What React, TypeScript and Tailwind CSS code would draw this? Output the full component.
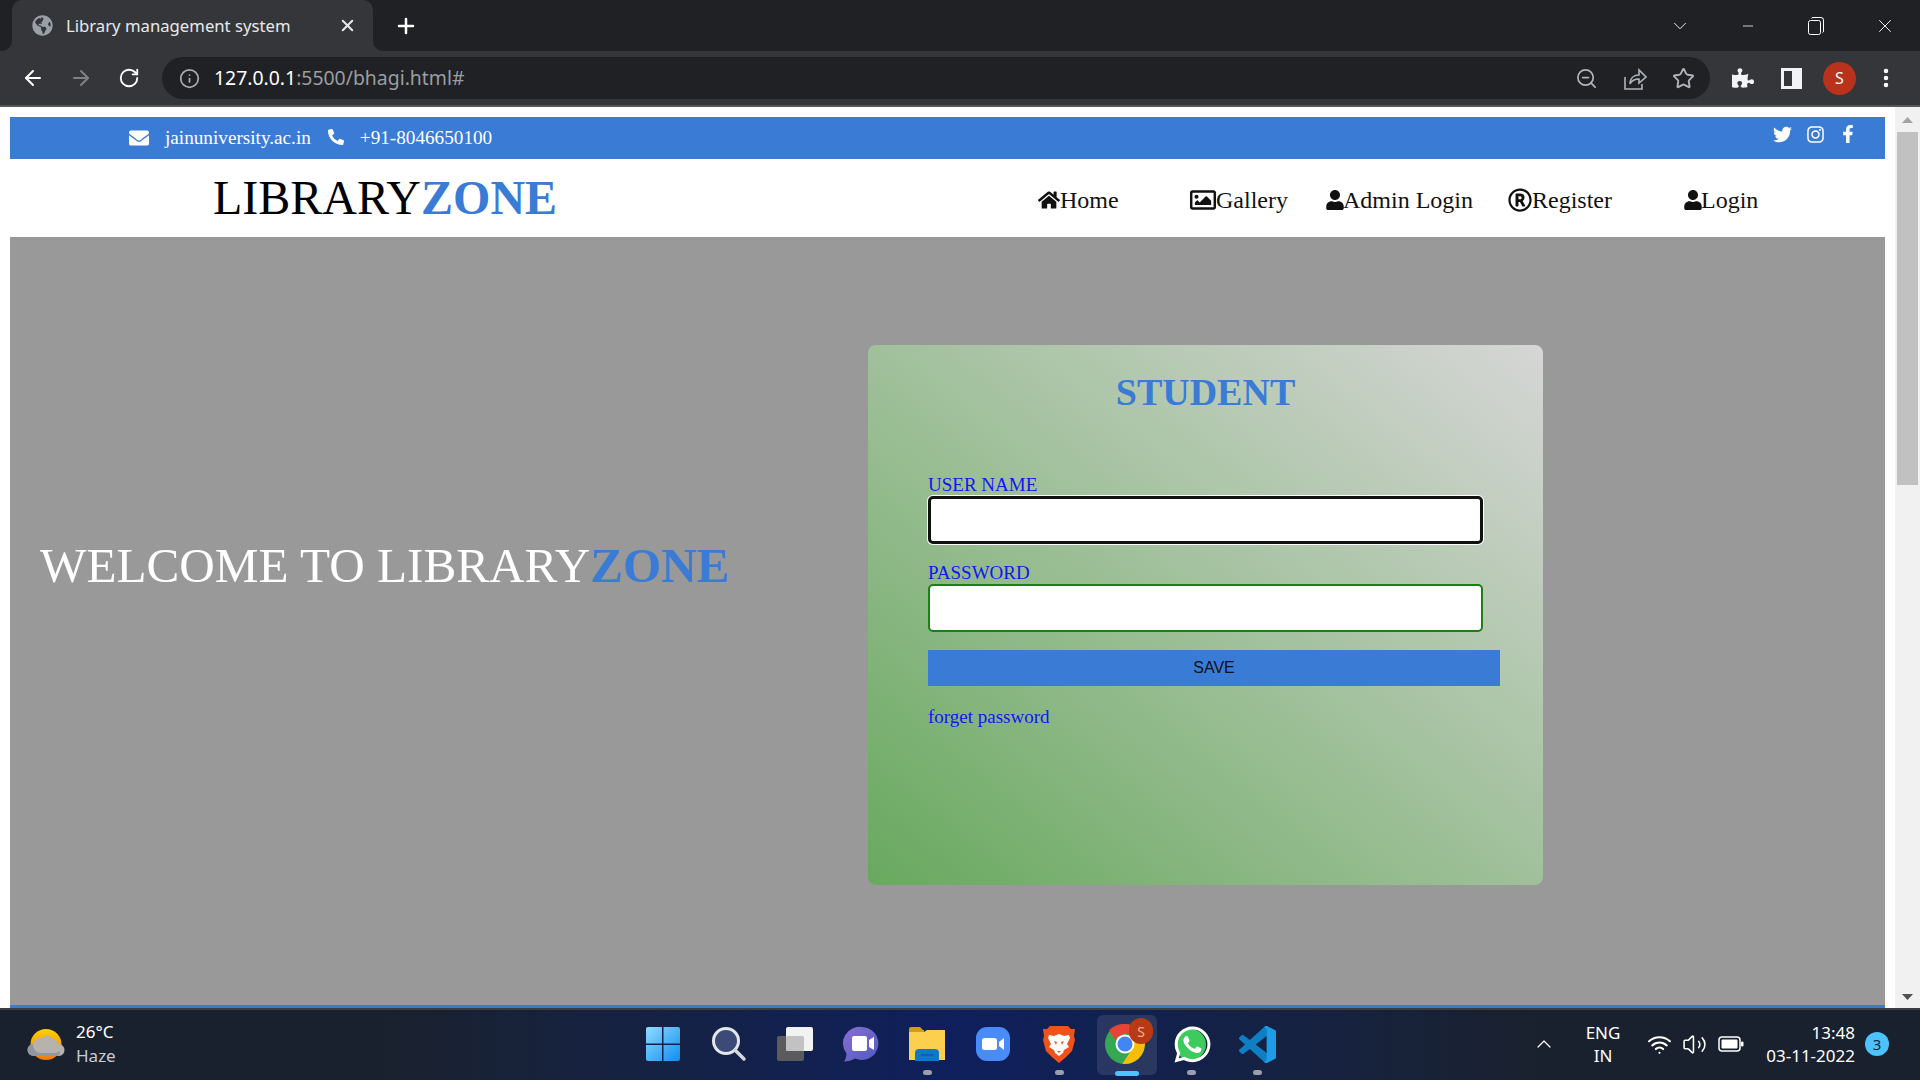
import React from 'react';
import {
  ArrowLeft, ArrowRight, RotateCw, Info, ZoomOut, Star, MoreVertical, Plus, X, ChevronDown, ChevronUp, Minus, Volume2, Wifi,
} from 'lucide-react';
import {
  FaEnvelope, FaPhoneAlt, FaTwitter, FaInstagram, FaFacebookF, FaHome, FaRegImage, FaUser, FaRegRegistered, FaGlobeAmericas, FaWhatsapp, FaPuzzlePiece,
} from 'react-icons/fa';

const serif = "font-['Liberation_Serif',serif]";

const NavItem = ({ icon, label, width }: { icon: React.ReactNode; label: string; width: string }) => (
  <a href="#" className={`flex items-center mt-[4px] text-[24px] text-[#111] ${width}`}>
    {icon}
    <span>{label}</span>
  </a>
);

const Field = ({ label, border, top }: { label: string; border: string; top: string }) => (
  <div className={top}>
    <label className="block text-[19px] leading-[22px] text-[#1414f5]">{label}</label>
    <input className={`block w-[555px] h-[48px] bg-white rounded-[5px] ${border}`} />
  </div>
);

const TaskIcon = ({ children, dot, active }: { children: React.ReactNode; dot?: boolean; active?: boolean }) => (
  <div className="relative w-[66px] h-[72px] pb-[2px] flex items-center justify-center">
    {active && <div className="absolute left-[5px] top-[6px] w-[60px] h-[60px] rounded-[6px] bg-white/10" />}
    <div className="relative">{children}</div>
    {dot && <div className="absolute bottom-[6px] left-[29px] w-[9px] h-[5px] rounded-full bg-[#9a9fab]" />}
    {active && <div className="absolute bottom-[5px] left-[23px] w-[24px] h-[5px] rounded-full bg-[#4cc2ff]" />}
  </div>
);

const WinLogo = () => (
  <svg width="36" height="36" viewBox="0 0 36 36">
    <defs>
      <linearGradient id="win" x1="0" y1="0" x2="1" y2="1">
        <stop offset="0" stopColor="#8fdcff" />
        <stop offset="1" stopColor="#0f8df0" />
      </linearGradient>
    </defs>
    <path fill="url(#win)" d="M1 3a2 2 0 0 1 2-2h14v16.500H1zM18.500 1H33a2 2 0 0 1 2 2v14.500H18.500zM1 19h16v16H3a2 2 0 0 1-2-2zM18.500 19H35v14a2 2 0 0 1-2 2H18.500z" />
  </svg>
);

const SearchIcon = () => (
  <svg width="36" height="36" viewBox="0 0 36 36">
    <circle cx="15" cy="15" r="12.500" fill="#3c4a78" stroke="#e4e6ea" strokeWidth="3" />
    <path d="M24 24l9 9" stroke="#d4d6dc" strokeWidth="3.500" strokeLinecap="round" />
  </svg>
);

const TaskView = () => (
  <svg width="38" height="36" viewBox="0 0 38 36">
    <rect x="1" y="10" width="27" height="25" rx="2" fill="#5b5b5d" />
    <rect x="10" y="1" width="27" height="24" rx="2" fill="#f2f2f2" />
    <rect x="10" y="10" width="18" height="15" rx="1.500" fill="#c2c2c2" />
  </svg>
);

const ChatIcon = () => (
  <svg width="36" height="36" viewBox="0 0 36 36">
    <defs>
      <linearGradient id="chat" x1="0" y1="0" x2="1" y2="1">
        <stop offset="0" stopColor="#8a6fcf" />
        <stop offset="1" stopColor="#4e5bc4" />
      </linearGradient>
    </defs>
    <path fill="url(#chat)" d="M19 1a16.500 16.500 0 1 1-7 31.500C9 34.500 5 35.500 1 35.500c1.500-2 2.500-5 2.500-8A16.500 16.500 0 0 1 19 1z" />
    <rect x="9" y="10" width="15" height="15" rx="2" fill="#fff" />
    <path fill="#fff" d="M26 14l5-3v13l-5-3z" />
  </svg>
);

const FolderIcon = () => (
  <svg width="38" height="36" viewBox="0 0 38 36">
    <path fill="#d69e0d" d="M1 3a2 2 0 0 1 2-2h9l3 3h1v4H1z" />
    <path fill="#fdcf4f" d="M1 6h15l3-2h18v30H1z" />
    <path fill="#1278c4" d="M7 35V27a4 4 0 0 1 4-4h16a4 4 0 0 1 4 4v8z" />
    <path d="M13 29h12" stroke="#0b5c9c" strokeWidth="1.500" />
  </svg>
);

const ZoomApp = () => (
  <svg width="34" height="34" viewBox="0 0 34 34">
    <rect width="34" height="34" rx="11" fill="#4a8cf7" />
    <rect x="6" y="11" width="15" height="12" rx="2.500" fill="#fff" />
    <path fill="#fff" d="M23 15l5-4v12l-5-4z" />
  </svg>
);

const BraveIcon = () => (
  <svg width="32" height="37" viewBox="0 0 32 37">
    <path fill="#f1511b" d="M7 0h18l3 3 4 0-1 7 1 4-3 11-7 7-6 5-6-5-7-7L0 14l1-4-1-7 4 0z" />
    <path fill="#fff" d="M6 9l5 1 5-2 5 2 5-1 1 3-3 6 2 3-5 3-1 3-4 3-4-3-1-3-5-3 2-3-3-6z" />
    <path fill="#f1511b" d="M11 15l3 1-1 3zM21 15l-3 1 1 3zM14 25h4l-2 2z" />
  </svg>
);

const ChromeIcon = () => (
  <svg width="42" height="42" viewBox="0 0 42 42">
    <circle cx="21" cy="21" r="20" fill="#34a853" />
    <path fill="#ea4335" d="M21 1a20 20 0 0 1 17.300 10H21a10 10 0 0 0-9.300 6.300L5 7.500A20 20 0 0 1 21 1z" />
    <path fill="#fbbc04" d="M38.300 11a20 20 0 0 1-19.800 29.800L27.300 27A10 10 0 0 0 28 14 9 9 0 0 0 26 11z" />
    <circle cx="21" cy="21" r="9.500" fill="#fff" />
    <circle cx="21" cy="21" r="7.500" fill="#4285f4" />
  </svg>
);

const VsCode = () => (
  <svg width="37" height="37" viewBox="0 0 100 100">
    <path fill="#0f7ec2" fillRule="evenodd" d="M70.900 99.300a6.200 6.200 0 0 0 5-.2l20.600-9.900a6.200 6.200 0 0 0 3.500-5.600V16.400a6.200 6.200 0 0 0-3.500-5.600L75.900.9a6.200 6.200 0 0 0-7.100 1.200L29.400 38.100 12.200 25a4.200 4.200 0 0 0-5.300.2L1.400 30.300a4.200 4.200 0 0 0 0 6.200L16.300 50 1.400 63.500a4.200 4.200 0 0 0 0 6.200l5.500 5a4.200 4.200 0 0 0 5.300.2l17.200-13L68.800 97.900a6.200 6.200 0 0 0 2.100 1.400zM75 27.300 45.100 50 75 72.700z" />
    <path fill="#1d9ce8" d="M70.900 99.300a6.200 6.200 0 0 0 5-.2l20.600-9.900a6.200 6.200 0 0 0 3.500-5.600V16.400a6.200 6.200 0 0 0-3.500-5.600L75.900.9a6.200 6.200 0 0 0-7.100 1.200L75 10v80l-6.200 8z" />
  </svg>
);

const Weather = () => (
  <svg width="38" height="32" viewBox="0 0 38 32">
    <defs>
      <linearGradient id="sun" x1="0" y1="0" x2="0" y2="1">
        <stop offset="0" stopColor="#ffd000" />
        <stop offset="1" stopColor="#f07a10" />
      </linearGradient>
    </defs>
    <circle cx="19" cy="15.500" r="15.500" fill="url(#sun)" />
    <path fill="#b7b2ab" d="M7 27a6 6 0 0 1-1-12 8 8 0 0 1 9-6 7 7 0 0 1 11 1 6 6 0 0 1 5 5 6 6 0 0 1 1 12z" />
    <path fill="#7f8c99" opacity="0.700" d="M7 27a6 6 0 0 1-1-12c0 5 3 9 8 9h14c2 0 4-1 5-2a5 5 0 0 1-2 5z" />
  </svg>
);

const Restore = () => (
  <svg width="16" height="18" viewBox="0 0 16 18" fill="none" stroke="#fff" strokeWidth="1">
    <rect x="0.500" y="3.500" width="12" height="14" rx="2" />
    <path d="M3.500 1.500a1.500 1.500 0 0 1 1.500-1h8a2.500 2.500 0 0 1 2.500 2.500v11a1.500 1.500 0 0 1-1 1.500" />
  </svg>
);

const SidePanel = () => (
  <svg width="21" height="21" viewBox="0 0 21 21">
    <rect width="21" height="21" fill="#f1f3f4" />
    <rect x="3" y="3" width="8" height="15" fill="#35363a" />
  </svg>
);

const ShareArrow = () => (
  <svg width="23" height="24" viewBox="0 0 23 24" fill="none" stroke="#b0b3b8" strokeWidth="1.600">
    <path d="M1 11v12h17v-5" />
    <path d="M6 18c0-6 4-9 9-9V4l7 7-7 6v-4c-4 0-7 1-9 5z" />
  </svg>
);

const Battery = () => (
  <svg width="26" height="16" viewBox="0 0 26 16">
    <rect x="1" y="1" width="21" height="14" rx="3" fill="none" stroke="#fff" strokeWidth="1.500" />
    <rect x="3.500" y="3.500" width="16" height="9" rx="1" fill="#fff" />
    <rect x="23" y="5.500" width="2.500" height="5" rx="1" fill="#fff" />
  </svg>
);

export default function App() {
  return (
    <div className="w-[1920px] h-[1080px] flex flex-col overflow-hidden bg-white font-['Noto_Sans',sans-serif]">
      {/* tab strip */}
      <div className="h-[51px] bg-[#202124] flex items-end pl-[12px] text-white">
        <div className="relative w-[361px] h-[51px] bg-[#35363a] rounded-t-[10px] flex items-center pl-[20px] pr-[16px] text-[16.700px] text-[#e8eaed]">
          <svg className="absolute -left-[10px] bottom-0" width="10" height="10" viewBox="0 0 10 10"><path d="M10 0v10H0a10 10 0 0 0 10-10z" fill="#35363a" /></svg>
          <svg className="absolute -right-[10px] bottom-0" width="10" height="10" viewBox="0 0 10 10"><path d="M0 0v10h10A10 10 0 0 1 0 0z" fill="#35363a" /></svg>
          <FaGlobeAmericas className="text-[21px] text-[#9aa0a6]" />
          <span className="ml-[13px] flex-1">Library management system</span>
          <X size={19} strokeWidth={2.500} />
        </div>
        <div className="h-[51px] flex items-center ml-[21px] flex-1">
          <Plus size={24} strokeWidth={2.500} />
          <div className="ml-auto flex items-center h-full">
            <ChevronDown size={22} strokeWidth={1} className="mr-[49px]" />
            <Minus size={16} strokeWidth={1.200} className="mr-[52px]" />
            <Restore />
            <X size={22} strokeWidth={1} className="ml-[50px] mr-[24px]" />
          </div>
        </div>
      </div>

      {/* toolbar */}
      <div className="h-[56px] bg-[#35363a] border-b-2 border-[#55565a] flex items-center pl-[21px] text-white">
        <ArrowLeft size={24} strokeWidth={2} />
        <ArrowRight size={24} strokeWidth={2} className="ml-[24px] text-[#7f8185]" />
        <RotateCw size={22} strokeWidth={2} className="ml-[25px]" />
        <div className="ml-[22px] w-[1548px] h-[42px] rounded-full bg-[#202124] flex items-center pl-[17px] pr-[15px]">
          <Info size={21} className="text-[#a9acb1]" />
          <span className="ml-[14px] text-[19.400px] text-white">
            127.0.0.1<span className="text-[#9a9da1]">:5500/bhagi.html#</span>
          </span>
          <div className="ml-auto flex items-center text-[#b0b3b8]">
            <ZoomOut size={23} strokeWidth={1.800} />
            <div className="ml-[26px]"><ShareArrow /></div>
            <Star size={23} strokeWidth={2} className="ml-[25px]" />
          </div>
        </div>
        <FaPuzzlePiece className="ml-[22px] text-[22px] text-[#f1f3f4]" />
        <div className="ml-[27px]"><SidePanel /></div>
        <div className="ml-[21px] w-[33px] h-[33px] rounded-full bg-[#b8321c] flex items-center justify-center text-[16px] text-white">S</div>
        <MoreVertical size={24} strokeWidth={2.500} className="ml-[18px]" />
      </div>

      {/* page */}
      <div className="flex-1 flex min-h-0">
        <div className={`w-[1895px] pl-[10px] pr-[10px] pt-[10px] flex flex-col ${serif}`}>
          <div className="h-[42px] bg-[#3a7bd5] flex items-center pl-[119px] pr-[28px] text-white">
            <FaEnvelope className="text-[20px]" />
            <span className="ml-[16px] text-[19.200px]">jainuniversity.ac.in</span>
            <FaPhoneAlt className="ml-[17px] text-[16px] -mt-[3px]" />
            <span className="ml-[16px] text-[19.200px]">+91-8046650100</span>
            <div className="ml-auto flex items-center gap-[14px] -mt-[8px]">
              <FaTwitter className="text-[19px]" />
              <FaInstagram className="text-[19px]" />
              <FaFacebookF className="text-[18px]" />
            </div>
          </div>

          <div className="h-[78px] flex items-center">
            <div className="w-[1028px] pl-[203px] text-[48px] text-black">
              LIBRARY<span className="font-bold text-[#3a7bd5]">ZONE</span>
            </div>
            <NavItem width="w-[152px]" icon={<FaHome className="text-[22px]" />} label="Home" />
            <NavItem width="w-[136px]" icon={<FaRegImage className="text-[26px]" />} label="Gallery" />
            <NavItem width="w-[182px]" icon={<FaUser className="text-[20px] -ml-[1px] -mr-[2px]" />} label="Admin Login" />
            <NavItem width="w-[176px]" icon={<FaRegRegistered className="text-[24px]" />} label="Register" />
            <NavItem width="w-[90px]" icon={<FaUser className="text-[20px] -ml-[1px] -mr-[2px]" />} label="Login" />
          </div>

          <div className="flex-1 bg-[#999999] border-b-[3px] border-[#3a7bd5] flex">
            <div className="w-[858px] pl-[30px] pt-[298px] text-[49.200px] leading-[62px] text-white">
              WELCOME TO LIBRARY<span className="font-bold text-[#3a7bd5]">ZONE</span>
            </div>
            <div className="mt-[108px] w-[675px] h-[540px] rounded-[8px] bg-linear-to-tr from-[#68a95e] to-[#d6d6d6] pl-[60px] pt-[23px]">
              <h2 className="w-[555px] text-center text-[38px] leading-[48px] font-bold text-[#3a7bd5]">STUDENT</h2>
              <Field top="mt-[58px]" label="USER NAME" border="border-[3px] border-[#111] ring-1 ring-white" />
              <Field top="mt-[18px]" label="PASSWORD" border="border-2 border-[#1a8015]" />
              <button className="mt-[18px] block w-[572px] h-[36px] bg-[#3a7bd5] font-['Liberation_Sans',sans-serif] text-[16px] text-[#111]">SAVE</button>
              <a href="#" className="mt-[20px] block text-[19px] leading-[22px] text-[#1414f5]">forget password</a>
            </div>
          </div>
        </div>

        {/* scrollbar */}
        <div className="w-[25px] bg-[#f1f1f1] flex flex-col items-center">
          <div className="h-[25px] flex items-center justify-center">
            <svg width="11" height="6" viewBox="0 0 11 6"><path d="M5.500 0L11 6H0z" fill="#a3a3a3" /></svg>
          </div>
          <div className="w-[21px] h-[353px] bg-[#c1c1c1]" />
          <div className="mt-auto h-[23px] flex items-center justify-center">
            <svg width="11" height="6" viewBox="0 0 11 6"><path d="M5.500 6L11 0H0z" fill="#505050" /></svg>
          </div>
        </div>
      </div>

      {/* taskbar */}
      <div className="h-[72px] border-t-2 border-[#3a3d42] flex items-center text-white bg-linear-to-r from-[#1a212e] from-[20%] via-[#0f1f5c] via-[50%] to-[#1a212e] to-[80%]">
        <div className="w-[630px] flex items-center pl-[27px]">
          <Weather />
          <div className="ml-[11px] leading-[24px] -mt-[2px]">
            <div className="text-[17px]">26°C</div>
            <div className="text-[17px] text-[#c8cbd0]">Haze</div>
          </div>
        </div>
        <div className="flex">
          <TaskIcon><WinLogo /></TaskIcon>
          <TaskIcon><SearchIcon /></TaskIcon>
          <TaskIcon><TaskView /></TaskIcon>
          <TaskIcon><ChatIcon /></TaskIcon>
          <TaskIcon dot><FolderIcon /></TaskIcon>
          <TaskIcon><ZoomApp /></TaskIcon>
          <TaskIcon dot><BraveIcon /></TaskIcon>
          <TaskIcon active>
            <ChromeIcon />
            <div className="absolute -top-[5px] -right-[7px] w-[24px] h-[26px] rounded-full bg-[#b83a14] flex items-center justify-center text-[14px] text-[#f0b0a0]">S</div>
          </TaskIcon>
          <TaskIcon dot>
            <div className="relative w-[37px] h-[41px] -ml-[2px]">
              <div className="absolute left-[3px] top-[5px] w-[31px] h-[31px] rounded-full bg-[#3ecb5d]" />
              <FaWhatsapp className="relative text-[41px] text-white" />
            </div>
          </TaskIcon>
          <TaskIcon dot><VsCode /></TaskIcon>
        </div>
        <div className="flex-1 flex items-center pl-[242px] -mt-[2px]">
          <ChevronUp size={24} strokeWidth={1.200} />
          <div className="ml-[27px] w-[40px] text-center text-[17px] leading-[23px]">ENG<br />IN</div>
          <Wifi size={25} strokeWidth={2} className="ml-[24px]" />
          <Volume2 size={25} strokeWidth={1.500} className="ml-[10px]" />
          <div className="ml-[11px]"><Battery /></div>
          <div className="w-[111px] text-right text-[17px] leading-[23px]">13:48<br />03-11-2022</div>
          <div className="ml-[10px] w-[24px] h-[24px] rounded-full bg-[#4cc2ff] flex items-center justify-center text-[15px] text-[#13233a]">3</div>
        </div>
      </div>
    </div>
  );
}
